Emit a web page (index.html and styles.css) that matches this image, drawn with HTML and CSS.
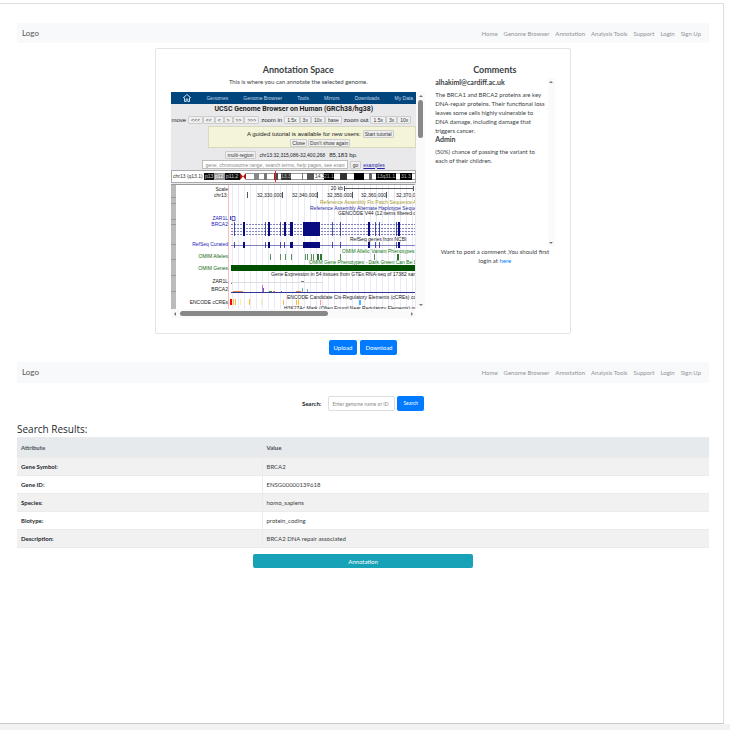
FILE: index.html
```html
<!DOCTYPE html>
<html lang="en">
<head>
<meta charset="utf-8">
<title>Annotation Space</title>
<link rel="stylesheet" href="styles.css">
</head>
<body>
<main class="frame">
  <header class="navbar">
    <a class="brand" href="#">Logo</a>
    <nav class="links"><a href="#">Home</a><a href="#">Genome Browser</a><a href="#">Annotation</a><a href="#">Analysis Tools</a><a href="#">Support</a><a href="#">Login</a><a href="#">Sign Up</a></nav>
  </header>

  <section class="card">
    <div class="space">
      <h2>Annotation Space</h2>
      <p class="lead">This is where you can annotate the selected genome.</p>
      <div class="viewer">
        <div class="browser">
          <nav class="menu">
            <svg width="8" height="8" viewBox="0 0 8 8" aria-hidden="true"><path d="M0 4 4 0.500 8 4M1.500 3.600V7.500H3.200V5H4.800V7.500H6.500V3.600" fill="none" stroke="#c3d6e8" stroke-width="1"/></svg>
            <a href="#">Genomes</a><a href="#">Genome Browser</a><a href="#">Tools</a><a href="#">Mirrors</a><a href="#">Downloads</a><a href="#">My Data</a>
          </nav>
          <h3>UCSC Genome Browser on Human (GRCh38/hg38)</h3>
          <div class="move">
            <span>move</span>
            <div class="group"><button>&lt;&lt;&lt;</button><button>&lt;&lt;</button><button>&lt;</button><button>&gt;</button><button>&gt;&gt;</button><button>&gt;&gt;&gt;</button></div>
            <span>zoom in</span>
            <div class="group"><button>1.5x</button><button>3x</button><button>10x</button><button>base</button></div>
            <span>zoom out</span>
            <div class="group"><button>1.5x</button><button>3x</button><button>10x</button></div>
          </div>
          <div class="notice">
            <div class="line"><span>A guided tutorial is available for new users:</span><button>Start tutorial</button></div>
            <div class="line tight"><button>Close</button><button>Don't show again</button></div>
          </div>
          <div class="position"><button>multi-region</button><span class="coords">chr13:32,315,086-32,400,268</span><span>85,183 bp.</span></div>
          <div class="lookup"><input type="text" aria-label="Position search" placeholder="gene, chromosome range, search terms, help pages, see examples"><button>go</button><a href="#">examples</a></div>
          <div class="ideogram">
            <svg width="244" height="11" viewBox="0 0 244 11">
              <text x="1" y="7" fill="#333">chr13 (q13.1)</text>
              <rect x="32" y="2" width="41" height="7" fill="#111"/><rect x="42" y="2" width="11" height="7" fill="#999"/>
              <text x="33" y="7" fill="#ccc">p13</text><text x="43" y="7" fill="#fff">p12</text><text x="54" y="7" fill="#ccc">p11.2</text>
              <rect x="68" y="2" width="6" height="7" fill="#fff"/><path d="M68 2 71 5.500 68 9ZM74 2V9L71 5.500Z" fill="#a11"/>
              <path d="M74 2.500H243M74 8.500H243" stroke="#999"/>
              <rect x="82" y="2" width="5" height="7" fill="#888"/><rect x="92" y="2" width="3" height="7" fill="#777"/>
              <rect x="102" y="2" width="4" height="7" fill="#544"/><path d="M103.500 0V11" stroke="#e22"/>
              <rect x="109" y="2" width="10" height="7" fill="#333"/><text x="109" y="7" fill="#bbb">13.3</text>
              <rect x="130" y="2" width="1" height="7" fill="#777"/><rect x="135" y="2" width="7" height="7" fill="#555"/>
              <text x="143" y="7" fill="#333">14.3</text><rect x="152" y="2" width="10" height="7" fill="#000"/><text x="152" y="7" fill="#aaa">21.1</text>
              <rect x="168" y="2" width="7" height="7" fill="#333"/><rect x="182" y="2" width="10" height="7" fill="#000"/>
              <rect x="197" y="2" width="3" height="7" fill="#666"/><rect x="204" y="2" width="20" height="7" fill="#000"/><text x="205" y="7" fill="#bbb">13q31.1</text>
              <rect x="228" y="2" width="12" height="7" fill="#000"/><text x="229" y="7" fill="#bbb">31.3</text>
            </svg>
          </div>
          <div class="tracks">
            <svg width="244" height="125" viewBox="0 0 244 125">
              <defs><pattern id="grid" width="6" height="125" patternUnits="userSpaceOnUse"><path d="M1.500 0V125" stroke="#e9e9fa"/></pattern></defs>
              <rect width="244" height="125" fill="#fff"/>
              <rect x="58" width="186" height="125" fill="url(#grid)"/>
              <rect width="5" height="125" fill="#bbb"/><path d="M0 .5H244" stroke="#999"/><path d="M0 13.500H5M0 19.500H5M0 35.500H5M0 40.500H5M0 60.500H5M0 75.500H5M0 91.500H5M0 107.500H5" stroke="#999"/>
              <path d="M57.500 1V125" stroke="#fbb"/>
              <g text-anchor="end" fill="#222">
                <text x="57" y="7">Scale</text><text x="57" y="13">chr13:</text>
                <text x="57" y="36" fill="#22b">ZAR1L</text><text x="57" y="42" fill="#22b">BRCA2</text>
                <text x="57" y="62" fill="#22b">RefSeq Curated</text>
                <text x="57" y="74" fill="#161">OMIM Alleles</text><text x="57" y="86" fill="#161">OMIM Genes</text>
                <text x="57" y="99">ZAR1L</text><text x="57" y="107">BRCA2</text><text x="57" y="120">ENCODE cCREs</text>
                <text x="172" y="6">20 kb</text>
                <text x="111" y="13">32,330,000</text><text x="146" y="13">32,340,000</text><text x="181" y="13">32,350,000</text><text x="215" y="13">32,360,000</text>
              </g>
              <path d="M173 4.500H242M173.500 2V7M242.500 2V7M76.500 8V14M111.500 8V14M146.500 8V14M181.500 8V14M215.500 8V14" stroke="#555" fill="none"/>
              <text x="225" y="13" fill="#222">32,370,0</text>
              <text x="149" y="20" fill="#a99a2c">Reference Assembly Fix Patch Sequence A</text>
              <text x="139" y="26" fill="#2a2a99">Reference Assembly Alternate Haplotype Sequer</text>
              <text x="167" y="31" fill="#222">GENCODE V44 (12 items filtered o</text>
              <path d="M59.500 32V36M61 32.500H64V36.500H61Z" stroke="#55b" fill="none"/>
              <g stroke="#0b0b80" fill="none">
                <path d="M60 40.500H244M60 44.500H244M60 47.500H244M60 50.500H244" stroke-dasharray="2 1" opacity=".5"/>
                <path d="M60 61.500H244" opacity=".5"/>
                <path d="M63.500 38V52M94.500 38V52M109.500 38V52M161.500 38V52M169.500 38V52M204.500 38V52M208.500 38V52M225.500 38V52M63.500 58V64M94.500 58V64M109.500 58V64M113.500 58V64M161.500 58V64M169.500 58V64M204.500 58V64M208.500 58V64M225.500 58V64" opacity=".7"/>
                <path d="M73 38V52M98 38V52M114 38V52M198 38V52M228 38V52M73 58V64M98 58V64M198 58V64M228 58V64" stroke-width="2"/>
              </g>
              <path d="M119 38H122V52H119ZM132 38H149V52H132ZM119 58H122V64H119ZM132 58H149V64H132Z" fill="#0b0b80"/>
              <text x="179" y="57" fill="#222">RefSeq genes from NCBI</text>
              <path d="M99.500 70V76M109.500 70V76M114.500 70V76M120.500 70V76M134.500 70V76M136.500 70V76M140.500 70V76M142.500 70V76M169.500 70V76M203.500 70V76" stroke="#5b915b"/><path d="M147 70V76M150 70V76M227 70V76" stroke="#2c772c" stroke-width="2"/>
              <text x="171" y="69" fill="#171">OMIM Allelic Variant Phenotypes</text>
              <text x="138" y="80" fill="#171">OMIM Gene Phenotypes - Dark Green Can Be D</text>
              <rect x="60" y="81" width="184" height="6" fill="#005000"/>
              <text x="100" y="92" fill="#222">Gene Expression in 54 tissues from GTEx RNA-seq of 17382 sam</text>
              <path d="M60 99.500H61M130 97.500H133" stroke="#777"/><path d="M60 98.500H152" stroke="#ddd"/>
              <path d="M60 108.500H244" stroke="#33339a"/>
              <path d="M91.500 101V108" stroke="#c6c"/><path d="M92.500 104V108M110.500 107V108" stroke="#56b"/><path d="M62 107.500H72M102 107.500H104M125 107.500H130" stroke="#e08040"/><path d="M131.500 104V108M136.500 105V108" stroke="#7aa"/><path d="M98 107.500H101" stroke="#393"/>
              <text x="116" y="115" fill="#222">ENCODE Candidate Cis-Regulatory Elements (cCREs) cor</text>
              <rect x="59" y="115" width="2" height="6" fill="#f00"/><path d="M62.500 115V121M64.500 115V121M78.500 115V121M112.500 116V121M125.500 116V121M127.500 116V121" stroke="#fb3" /><path d="M69.500 115V121M90.500 115V121" stroke="#fe9"/><path d="M149.500 116V121" stroke="#f99"/><rect x="188" y="116" width="2" height="5" fill="#4bf"/>
              <text x="113" y="126" fill="#222">H3K27Ac Mark (Often Found Near Regulatory Elements) on</text>
            </svg>
          </div>
        </div>
        <div class="vbar" aria-hidden="true"><i class="up"></i><b></b><i class="down"></i></div>
        <div class="hbar" aria-hidden="true"><i class="left"></i><b></b><i class="right"></i></div>
      </div>
    </div>
    <aside class="comments">
      <h2>Comments</h2>
      <div class="thread">
        <div class="posts">
          <h4>alhakiml@cardiff.ac.uk</h4>
          <p>The BRCA1 and BRCA2 proteins are key DNA-repair proteins. Their functional loss leaves some cells highly vulnerable to DNA damage, including damage that triggers cancer.</p>
          <h4>Admin</h4>
          <p>(50%) chance of passing the variant to each of their children.</p>
        </div>
        <div class="rail" aria-hidden="true"><i class="up"></i><i class="down"></i></div>
      </div>
      <p class="signin">Want to post a comment ,You should first login at <a href="#">here</a></p>
    </aside>
  </section>

  <div class="actions"><button class="btn">Upload</button><button class="btn">Download</button></div>

  <header class="navbar second">
    <a class="brand" href="#">Logo</a>
    <nav class="links"><a href="#">Home</a><a href="#">Genome Browser</a><a href="#">Annotation</a><a href="#">Analysis Tools</a><a href="#">Support</a><a href="#">Login</a><a href="#">Sign Up</a></nav>
  </header>

  <form class="search">
    <label for="q">Search:</label>
    <input id="q" type="text" placeholder="Enter genome name or ID">
    <button class="btn" type="button">Search</button>
  </form>

  <h1>Search Results:</h1>
  <table>
    <thead><tr><th>Attribute</th><th>Value</th></tr></thead>
    <tbody>
      <tr><th>Gene Symbol:</th><td>BRCA2</td></tr>
      <tr><th>Gene ID:</th><td>ENSG00000139618</td></tr>
      <tr><th>Species:</th><td>homo_sapiens</td></tr>
      <tr><th>Biotype:</th><td>protein_coding</td></tr>
      <tr><th>Description:</th><td>BRCA2 DNA repair associated</td></tr>
    </tbody>
  </table>
  <button class="annotate">Annotation</button>
</main>
</body>
</html>
```
FILE: styles.css
```css
* { box-sizing: border-box; }
body {
  margin: 0; min-height: 100vh; padding: 3px 6px 6px 0;
  display: flex; flex-direction: column;
  background: linear-gradient(#f2f2f2, #f2f2f2) bottom / 100% 6px no-repeat #fff;
  font: 6px/9px Lato, "Open Sans", sans-serif; color: #3a3f44;
}
h1, h2, h3, h4, p { margin: 0; }
button, input { font: inherit; margin: 0; }
a { color: inherit; text-decoration: none; }
.frame {
  flex: 1; display: flex; flex-direction: column;
  padding: 19px 14px 0 17px;
  border: 1px solid #dedede; border-left: 0; border-bottom-color: #c8c8c8;
}
.navbar {
  display: flex; align-items: center; justify-content: space-between;
  height: 20px; padding: 0 8px 0 5px; background: #f8f9fa;
}
.brand { font-size: 8px; color: #555; }
.links { display: flex; gap: 6px; color: #929497; }
.second { height: 21px; margin-top: 7px; }

.card {
  width: 60%; margin: 5px auto 0; padding: 15px;
  display: grid; grid-template-columns: 68fr 32fr; gap: 10px;
  border: 1px solid #e4e4e4; border-radius: 2px;
}
h2 { font-size: 9px; line-height: 12px; font-weight: 700; text-align: center; }
.lead { text-align: center; line-height: 12px; margin-bottom: 4px; }
.viewer { display: grid; grid-template-columns: minmax(0, 1fr) 9px; }
.browser { overflow: hidden; background: #e9e9ec; font: 5px/6px "Liberation Sans", sans-serif; color: #222; white-space: nowrap; }
.menu { display: flex; align-items: center; justify-content: space-between; height: 12px; padding: 0 3px 0 12px; background: #00457c; color: #c3d6e8; }
.browser h3 { font-family: Roboto, sans-serif; font-size: 7px; line-height: 11px; text-align: center; }
.move { display: flex; align-items: center; height: 9px; gap: 2px; font-size: 6px; }
.group { display: flex; font-size: 5px; }
.group button { padding: 0 2px; }
.browser button { border: 1px solid #ccc; background: #f0f0f0; color: #333; line-height: 6px; border-radius: 1px; }
.notice { margin: 2px 0 0 37px; height: 22px; padding: 2px 0; border: 1px solid #d8d8c0; background: #f4f4d8; font-size: 6px; }
.line { display: flex; justify-content: center; align-items: center; gap: 2px; height: 9px; padding-left: 16px; }
.line button { font-size: 5px; padding: 0 1px; }
.line.tight { gap: 1px; }
.position { display: flex; align-items: center; height: 10px; margin-top: 2px; padding-left: 54px; gap: 4px; font-size: 6px; }
.position button, .coords { font-size: 5px; }
.position button { padding: 0 1px; }
.lookup { display: flex; align-items: center; height: 9px; padding-left: 31px; gap: 2px; }
.lookup input { width: 68%; height: 9px; padding: 0 2px; border: 1px solid #bbb; background: #fff; }
.lookup button { padding: 0 2px; }
.lookup a { color: #22a; text-decoration: underline; }
input::placeholder { color: #8b8b8b; opacity: 1; }
.browser svg { display: block; }
.ideogram { margin: 1px 0; border: 1px solid #aaa; background: #fff; overflow: hidden; }

.vbar, .rail { display: flex; flex-direction: column; align-items: center; background: #fafafa; padding: 3px 0; }
.vbar b { width: 5px; height: 38px; margin-top: 3px; border-radius: 3px; background: #888; }
.hbar { display: flex; align-items: center; height: 9px; padding: 0 3px; background: #fafafa; }
.hbar b { width: 148px; height: 5px; margin-left: 4px; border-radius: 3px; background: #888; }
.up, .down { border: 2px solid transparent; }
.up { border-top: 0; border-bottom-color: #777; }
.down { border-bottom: 0; border-top-color: #777; margin-top: auto; }
.left, .right { border: 2px solid transparent; }
.left { border-left: 0; border-right-color: #777; }
.right { border-right: 0; border-left-color: #777; margin-left: auto; }

.thread { display: flex; height: 169px; margin-top: 2px; }
.posts { flex: 1; }
.posts h4 { font-size: 7px; line-height: 9px; font-weight: 700; }
.posts p { margin-top: 3px; }
.rail { width: 7px; }
.signin { padding: 0 4px; text-align: center; }
.signin a { color: #007bff; }

.actions { display: flex; justify-content: center; gap: 3px; margin-top: 6px; }
.btn { height: 15px; padding: 0 5px; border: 0; border-radius: 2px; background: #007bff; color: #fff; }
.search { display: flex; justify-content: center; align-items: center; gap: 2px; margin-top: 13px; }
.search label { font-weight: 700; margin-right: 5px; color: #212529; }
.search input { width: 67px; height: 15px; padding: 0 3px; border: 1px solid #ddd; border-radius: 2px; font-size: 5px; }
.search .btn { font-size: 5px; padding: 0 6px; }
h1 { margin: 12px 0 1px; font: 500 10px/13px "Open Sans", sans-serif; color: #24292e; }
table { width: 100%; border-collapse: collapse; table-layout: fixed; }
th, td { height: 18px; padding: 0 4px; text-align: left; border: 1px solid #e9ebed; border-width: 1px 0; }
th:first-child { width: 245px; border-right-width: 1px; }
thead th { height: 20px; background: #e7eaed; color: #495057; }
tbody th { color: #24292e; }
tbody tr:nth-child(odd) { background: #f1f1f1; }
.annotate { align-self: center; width: 220px; height: 14px; margin-top: 6px; border: 0; border-radius: 2px; background: #17a2b8; color: #fff; }
```
